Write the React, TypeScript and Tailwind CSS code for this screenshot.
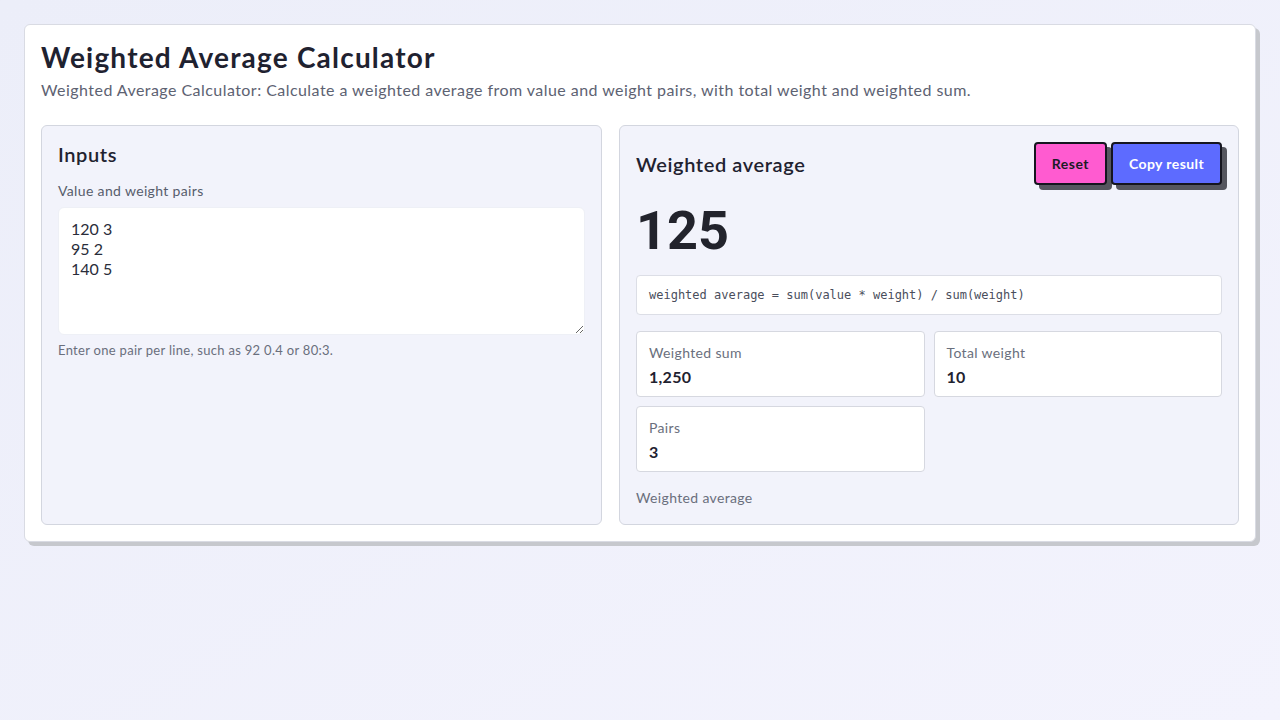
import { useMemo, useState } from "react";

const sans = "font-['Lato','Noto_Sans',sans-serif]";

function parsePairs(text: string) {
  const pairs: { value: number; weight: number }[] = [];
  for (const line of text.split("\n")) {
    const parts = line.trim().split(/[\s,:]+/).filter(Boolean);
    if (parts.length < 2) continue;
    const value = parseFloat(parts[0]);
    const weight = parseFloat(parts[1]);
    if (!isNaN(value) && !isNaN(weight)) pairs.push({ value, weight });
  }
  return pairs;
}

const defaultInput = "120 3\n95 2\n140 5";

export default function App() {
  const [input, setInput] = useState(defaultInput);

  const stats = useMemo(() => {
    const pairs = parsePairs(input);
    const sum = pairs.reduce((acc, p) => acc + p.value * p.weight, 0);
    const weight = pairs.reduce((acc, p) => acc + p.weight, 0);
    return {
      sum,
      weight,
      count: pairs.length,
      average: weight ? sum / weight : 0,
    };
  }, [input]);

  const fmt = (n: number) => n.toLocaleString("en-US", { maximumFractionDigits: 4 });

  return (
    <div className={`min-h-screen bg-gradient-to-br from-[#eceef9] to-[#f3f3fd] p-6 ${sans}`}>
      <div className="rounded-md border border-[#d9dbe3] bg-white px-4 pt-[14px] pb-4 shadow-[4px_4px_0_#c6c8cd]">
        <h1 className="text-[28px] font-bold leading-9 tracking-[1.2px] text-[#1f2230]">Weighted Average Calculator</h1>
        <p className="mt-[3px] text-base tracking-[0.45px] text-[#5d6272]">
          Weighted Average Calculator: Calculate a weighted average from value and weight pairs, with total weight and weighted sum.
        </p>

        <div className="mt-[23px] grid grid-cols-[561px_1fr] gap-[17px]">
          {/* Inputs */}
          <section className="h-[400px] rounded-md border border-[#d3d6df] bg-[#f2f3fb] px-4 pt-[14px]">
            <h2 className="text-xl font-semibold leading-7 tracking-[0.6px] text-[#1f2230]">Inputs</h2>
            <label className="mt-[13px] block text-sm tracking-[0.35px] text-[#575d6c]">Value and weight pairs</label>
            <textarea
              value={input}
              onChange={(e) => setInput(e.target.value)}
              className="mt-[6px] block h-[128px] w-full resize-y rounded-md border border-[#eef0f6] bg-white px-3 py-[11px] text-base leading-5 text-[#2a2d3a] outline-none"
            />
            <p className="mt-[6px] text-[13px] tracking-[0.3px] text-[#6a6f7d]">Enter one pair per line, such as 92 0.4 or 80:3.</p>
          </section>

          {/* Result */}
          <section className="h-[400px] rounded-md border border-[#d3d6df] bg-[#f2f3fb] px-4 pt-4">
            <div className="flex items-center justify-between">
              <h2 className="text-xl font-semibold tracking-[0.6px] text-[#1f2230]">Weighted average</h2>
              <div className="flex gap-1">
                <button
                  onClick={() => setInput(defaultInput)}
                  className="h-[43px] rounded-[4px] border-2 border-[#15151f] bg-[#ff5bd0] px-4 text-sm font-bold tracking-[0.5px] text-[#1b1b26] shadow-[5px_5px_0_#55565f]"
                >
                  Reset
                </button>
                <button
                  onClick={() => navigator.clipboard?.writeText(fmt(stats.average))}
                  className="h-[43px] rounded-[4px] border-2 border-[#15151f] bg-[#5d6bff] px-4 text-sm font-bold tracking-[0.4px] text-white shadow-[5px_5px_0_#55565f]"
                >
                  Copy result
                </button>
              </div>
            </div>

            <div className="mt-[14px] font-['Roboto',sans-serif] text-[54px] leading-[64px] font-bold text-[#22232c]">
              {fmt(stats.average)}
            </div>

            <div className="mt-[12px] rounded-[4px] border border-[#dcdee6] bg-white px-3 py-[11px] font-['DejaVu_Sans_Mono',monospace] text-xs leading-4 text-[#4a4e5c]">
              weighted average = sum(value * weight) / sum(weight)
            </div>

            <div className="mt-4 grid grid-cols-2 gap-[9px]">
              <Stat label="Weighted sum" value={fmt(stats.sum)} />
              <Stat label="Total weight" value={fmt(stats.weight)} />
              <Stat label="Pairs" value={String(stats.count)} />
            </div>

            <p className="mt-[16px] text-sm tracking-[0.35px] text-[#6a6f7d]">Weighted average</p>
          </section>
        </div>
      </div>
    </div>
  );
}

function Stat({ label, value }: { label: string; value: string }) {
  return (
    <div className="h-[66px] rounded-[4px] border border-[#d6d8e0] bg-white px-[12px] pt-[11px]">
      <p className="text-sm leading-5 tracking-[0.35px] text-[#6a6f7d]">{label}</p>
      <p className="mt-[2px] text-base leading-6 font-bold tracking-[0.3px] text-[#1f2230]">{value}</p>
    </div>
  );
}
